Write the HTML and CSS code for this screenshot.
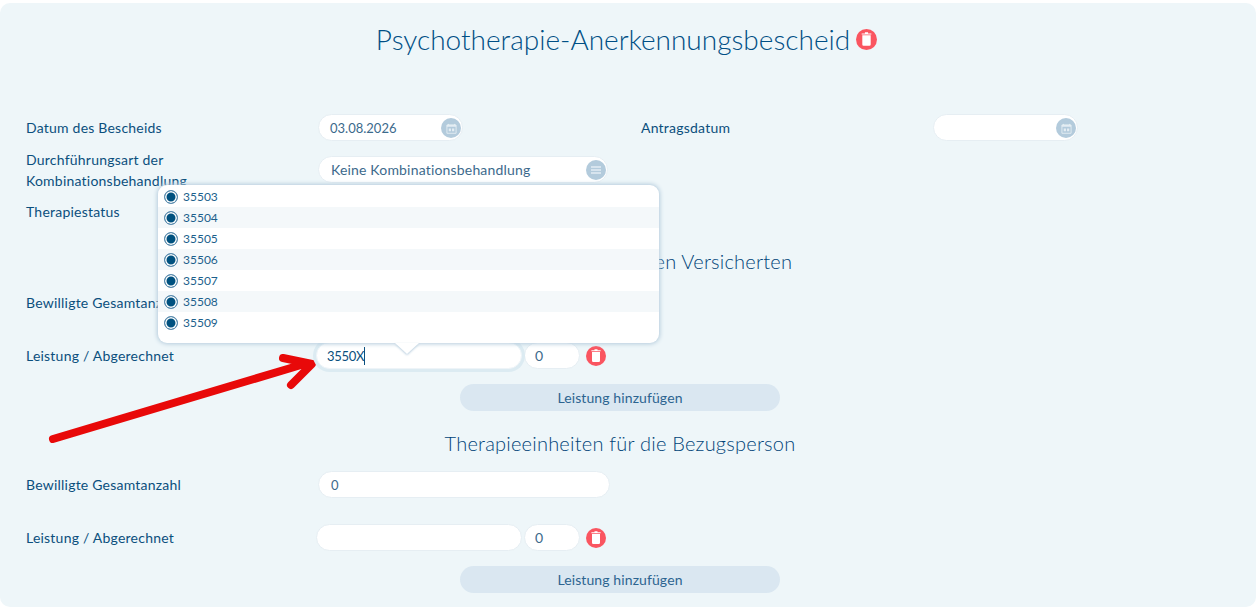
FILE: index.html
```html
<!DOCTYPE html>
<html lang="de">
<head>
<meta charset="utf-8">
<title>Psychotherapie-Anerkennungsbescheid</title>
<link rel="stylesheet" href="styles.css">
</head>
<body>
<main class="panel">
  <header class="title">
    <h1>Psychotherapie-Anerkennungsbescheid</h1>
    <svg class="trash trash-lg" viewBox="0 0 20 20"><circle cx="10" cy="10" r="10" fill="#fa5560"/><path d="M6 6h8v8.800a1.200 1.200 0 0 1-1.200 1.200H7.200A1.200 1.200 0 0 1 6 14.800z M5.400 4.200h3.100v-1h3v1h3.100v1.100H5.400z" fill="#fff"/></svg>
  </header>

  <section class="form">
    <div class="row row-top">
      <div class="label">Datum des Bescheids</div>
      <div class="field field-date">03.08.2026
        <span class="knob"><svg viewBox="0 0 12 12" width="11" height="11"><path d="M1 2.200h10v9H1z M2.800 1v1.600 M9.200 1v1.600" fill="none" stroke="#e4edf3" stroke-width="1"/><path d="M1 2h10v2H1z M3 6h2.400v3H3z M6.600 6H9v3H6.600z" fill="#e4edf3"/></svg></span>
      </div>
      <div class="label">Antragsdatum</div>
      <div class="field field-date">
        <span class="knob"><svg viewBox="0 0 12 12" width="11" height="11"><path d="M1 2.200h10v9H1z M2.800 1v1.600 M9.200 1v1.600" fill="none" stroke="#e4edf3" stroke-width="1"/><path d="M1 2h10v2H1z M3 6h2.400v3H3z M6.600 6H9v3H6.600z" fill="#e4edf3"/></svg></span>
      </div>
    </div>

    <div class="row row-combo">
      <div class="label label-two">Durchführungsart der Kombinationsbehandlung</div>
      <div class="field field-select">Keine Kombinationsbehandlung
        <span class="knob"><svg viewBox="0 0 12 12" width="12" height="12"><path d="M1 3h10M1 6h10M1 9h10" stroke="#e4edf3" stroke-width="1.600" fill="none"/></svg></span>
      </div>
    </div>

    <div class="row row-status">
      <div class="label">Therapiestatus</div>
    </div>

    <h2 class="heading heading-first">Therapieeinheiten für den Versicherten</h2>

    <div class="row row-count">
      <div class="label">Bewilligte Gesamtanzahl</div>
      <div class="field field-wide">0</div>
    </div>

    <div class="row row-service">
      <div class="label">Leistung / Abgerechnet</div>
      <div class="field field-service field-focus">
        <span class="typed">3550X</span><span class="caret"></span>
        <div class="popup">
          <div class="option"><span class="radio"></span>35503</div>
          <div class="option"><span class="radio"></span>35504</div>
          <div class="option"><span class="radio"></span>35505</div>
          <div class="option"><span class="radio"></span>35506</div>
          <div class="option"><span class="radio"></span>35507</div>
          <div class="option"><span class="radio"></span>35508</div>
          <div class="option"><span class="radio"></span>35509</div>
          <span class="popup-tip"></span>
        </div>
      </div>
      <div class="field field-num">0</div>
      <svg class="trash" viewBox="0 0 20 20"><circle cx="10" cy="10" r="10" fill="#fa5560"/><path d="M6 6h8v8.800a1.200 1.200 0 0 1-1.200 1.200H7.200A1.200 1.200 0 0 1 6 14.800z M5.400 4.200h3.100v-1h3v1h3.100v1.100H5.400z" fill="#fff"/></svg>
    </div>
    <div class="add">Leistung hinzufügen</div>

    <h2 class="heading heading-second">Therapieeinheiten für die Bezugsperson</h2>

    <div class="row row-count">
      <div class="label">Bewilligte Gesamtanzahl</div>
      <div class="field field-wide">0</div>
    </div>

    <div class="row row-service row-service-second">
      <div class="label">Leistung / Abgerechnet</div>
      <div class="field field-service"></div>
      <div class="field field-num">0</div>
      <svg class="trash" viewBox="0 0 20 20"><circle cx="10" cy="10" r="10" fill="#fa5560"/><path d="M6 6h8v8.800a1.200 1.200 0 0 1-1.200 1.200H7.200A1.200 1.200 0 0 1 6 14.800z M5.400 4.200h3.100v-1h3v1h3.100v1.100H5.400z" fill="#fff"/></svg>
    </div>
    <div class="add add-second">Leistung hinzufügen</div>
  </section>
</main>
<svg class="annotation" viewBox="0 0 1258 611" width="1258" height="611">
  <path d="M53 439 L306 363.500 M283 358 L312 364 L291 385" fill="none" stroke="#e80909" stroke-width="8" stroke-linecap="round" stroke-linejoin="round"/>
</svg>
</body>
</html>
```

FILE: styles.css
```css
* { box-sizing: border-box; }
html, body { margin: 0; padding: 0; height: 100%; overflow: hidden; background: #fff; }
body {
  font-family: Lato, "Noto Sans", sans-serif;
  font-size: 14px;
  color: #0b4f7d;
  position: relative;
}
.panel {
  margin: 3px 2px 0 0;
  padding-top: 16px;
  height: 604px;
  background: #eef6f9;
  border-radius: 10px;
  overflow: hidden;
}
.title {
  display: flex;
  align-items: center;
  justify-content: center;
  gap: 6px;
  height: 40px;
  padding-right: 3px;
}
h1 {
  margin: 0;
  font-size: 28px;
  font-weight: 300;
  color: #004f85;
  white-space: nowrap;
}
.form {
  width: 1188px;
  margin: 55px 0 0 26px;
}
.row {
  display: grid;
  grid-template-columns: 292px 323px 292px 145px;
  grid-template-rows: 27px;
  align-items: center;
  height: 27px;
}
.label { color: #0b4f7d; letter-spacing: .22px; }
.field {
  position: relative;
  display: flex;
  align-items: center;
  height: 27px;
  padding-left: 11px;
  background: #fff;
  border: 1px solid #e6eef3;
  border-radius: 14px;
  color: #3c6a8c;
  font-size: 13px;
}
.field-date { width: 145px; }
.field-wide { width: 292px; padding-left: 12px; }
.field-select { width: 290px; padding-left: 12px; font-size: 14px; letter-spacing: .18px; }
.knob {
  position: absolute;
  right: 1px;
  top: 3px;
  width: 20px;
  height: 20px;
  border-radius: 50%;
  background: #b3cbdc;
  display: flex;
  align-items: center;
  justify-content: center;
}
.row-combo { margin-top: 15px; }
.label-two { line-height: 21px; width: 200px; }
.row-status { margin-top: 15px; }
.heading {
  margin: 0;
  font-size: 20px;
  font-weight: 300;
  letter-spacing: .22px;
  text-align: center;
  color: #004478;
  line-height: 26px;
}
.heading-first { margin-top: 23px; }
.row-count { margin-top: 15px; }
.row-service {
  grid-template-columns: 290px 208px 56px 26px;
  margin-top: 26px;
}
.row-service-second { margin-top: 26px; }
.field-service { width: 206px; z-index: 2; padding-left: 10px; }
.field-focus { box-shadow: 0 0 0 3px #dcebf2; border-color: #eef4f8; }
.field-num { width: 56px; padding-left: 10px; font-size: 14px; }
.row-service .trash { margin-left: 6px; }
.trash { width: 20px; height: 20px; display: block; }
.trash-lg { width: 21px; height: 21px; }
.typed { color: #0b4f7d; letter-spacing: -.3px; }
.caret { display: inline-block; width: 1px; height: 18px; background: #0b4f7d; }
.popup {
  position: absolute;
  left: -159px;
  bottom: 25px;
  width: 501px;
  height: 158px;
  padding-top: 1px;
  background: #fff;
  border-radius: 9px;
  box-shadow: 0 0 4px 1px #b4cbdc;
  z-index: 5;
}
.option {
  display: flex;
  align-items: center;
  gap: 5px;
  height: 21px;
  padding-left: 6px;
  font-size: 12px;
  color: #1c5f8c;
}
.option:nth-child(even) { background: #f4f8fa; }
.radio {
  width: 14px;
  height: 14px;
  border-radius: 50%;
  border: 1.500px solid #5d8db0;
  background: #00517f;
  box-shadow: inset 0 0 0 1.500px #fff;
}
.popup-tip {
  position: absolute;
  left: 237px;
  top: 100%;
  width: 0;
  height: 0;
  border-left: 12px solid transparent;
  border-right: 12px solid transparent;
  border-top: 11px solid #fff;
  filter: drop-shadow(0 1px 1px #b4cbdc);
}
.add {
  width: 320px;
  height: 27px;
  margin: 15px auto 0;
  border-radius: 14px;
  background: #dae7f1;
  color: #2c6490;
  letter-spacing: .1px;
  display: flex;
  align-items: center;
  justify-content: center;
}
.heading-second { margin-top: 19px; }
.annotation {
  position: absolute;
  left: 0;
  top: 0;
  pointer-events: none;
}
```
